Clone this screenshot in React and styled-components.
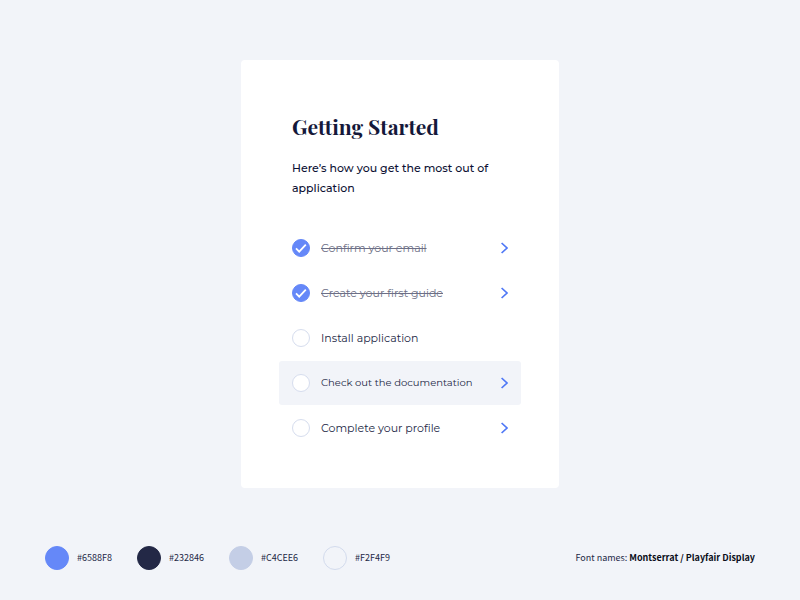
import React, { useState } from 'react'
import styled, { createGlobalStyle } from 'styled-components'

const GlobalStyle = createGlobalStyle`
    * {
        box-sizing: border-box;
    }

    body {
        margin: 0;
        background-color: #f2f4f9;
        color: #14183a;
        font-family: Montserrat, Inter, sans-serif;
    }
`

const Container = styled.div`
    min-height: 100vh;
    display: flex;
    flex-direction: column;
    justify-content: space-between;
    gap: 40px;
    padding: 60px 45px 30px;
`

const Card = styled.main`
    width: 100%;
    max-width: 318px;
    margin: 0 auto;
    padding: 51px 38px 37px;
    border-radius: 4px;
    background-color: white;
`

const Header = styled.header`
    padding: 0 13px;
    margin-bottom: 28px;
`

const Title = styled.h1`
    margin: 0;
    font-family: "Playfair Display", "Liberation Serif", serif;
    font-size: 21px;
    line-height: 30px;
    font-weight: 700;
`

const Desc = styled.p`
    margin: 17px 0 0;
    font-size: 11px;
    line-height: 20px;
    font-weight: 500;
    color: #0c1033;
`

const List = styled.ul`
    list-style: none;
    margin: 0;
    padding: 0;
`

const Item = styled.li`
    height: 44px;
    margin-bottom: 1px;
    padding: 0 13px;
    display: flex;
    align-items: center;
    border-radius: 3px;
    font-size: ${(props) => props.$active ? "10px" : "11px"};
    background-color: ${(props) => props.$active && "#f2f4f9"};
`

const Label = styled.label`
    flex: 1;
    display: flex;
    align-items: center;
    gap: 11px;
    line-height: 18px;
    color: ${(props) => props.$done ? "#6d6f86" : "#232846"};
    text-decoration: ${(props) => props.$done && "line-through"};
    cursor: pointer;
`

const CheckWrap = styled.span`
    display: grid;
    width: 18px;
    height: 18px;

    > * {
        grid-area: 1 / 1;
    }
`

const Checkbox = styled.input`
    appearance: none;
    width: 18px;
    height: 18px;
    margin: 0;
    border: 1px solid #d6ddee;
    border-radius: 50%;
    background-color: white;
    cursor: pointer;

    &:checked {
        border-color: #6588f8;
        background-color: #6588f8;
    }
`

const Tick = styled.svg`
    width: 18px;
    height: 18px;
    fill: none;
    stroke: white;
    stroke-width: 1.8;
    pointer-events: none;
`

const Open = styled.button`
    display: flex;
    padding: 0;
    border: none;
    background: none;
    color: #4f78f6;
    cursor: pointer;
`

const Footer = styled.footer`
    display: flex;
    flex-wrap: wrap;
    align-items: center;
    justify-content: space-between;
    font-family: "Noto Sans CJK JP", sans-serif;
    font-size: 9px;
    line-height: 24px;
    color: #232846;
`

const Palette = styled.div`
    display: flex;
    gap: 25px;
`

const Swatch = styled.div`
    display: flex;
    align-items: center;
    gap: 8px;
`

const Dot = styled.span`
    width: 24px;
    height: 24px;
    border-radius: 50%;
    border: 1px solid ${(props) => props.$border || props.$color};
    background-color: ${(props) => props.$color};
`

const Fonts = styled.p`
    margin: 0;

    b {
        color: #0a0e1a;
    }
`

const steps = [
    { id: "email", text: "Confirm your email", done: true, link: true },
    { id: "guide", text: "Create your first guide", done: true, link: true },
    { id: "install", text: "Install application", done: false, link: false },
    { id: "docs", text: "Check out the documentation", done: false, link: true, active: true },
    { id: "profile", text: "Complete your profile", done: false, link: true },
]

const colors = [
    { name: "#6588F8" },
    { name: "#232846" },
    { name: "#C4CEE6" },
    { name: "#F2F4F9", border: "#d3dbed" },
]

const Step = ({ step }) => {

    const [done, setDone] = useState(step.done)

    return (
        <Item $active={step.active}>
            <Label htmlFor={step.id} $done={done}>
                <CheckWrap>
                    <Checkbox id={step.id} type="checkbox" checked={done} onChange={() => setDone(!done)}/>
                    {done && <Tick viewBox="0 0 18 18"><path d="M4 9.4 L7.2 12.6 L13.8 5.6"/></Tick>}
                </CheckWrap>
                {step.text}
            </Label>
            {step.link && (
                <Open aria-label={step.text}>
                    <svg width="8" height="12" viewBox="0 0 8 12" fill="none" stroke="currentColor" strokeWidth="1.7">
                        <path d="M1.6 1 L7 6 L1.6 11"/>
                    </svg>
                </Open>
            )}
        </Item>
    )
}

const App = () => {
    return (
        <Container>
            <GlobalStyle />
            <Card>
                <Header>
                    <Title>Getting Started</Title>
                    <Desc>Here’s how you get the most out of application</Desc>
                </Header>
                <List>
                    {steps.map((step) => <Step key={step.id} step={step}/>)}
                </List>
            </Card>
            <Footer>
                <Palette>
                    {colors.map((color) => (
                        <Swatch key={color.name}>
                            <Dot $color={color.name} $border={color.border}/>
                            {color.name}
                        </Swatch>
                    ))}
                </Palette>
                <Fonts>Font names: <b>Montserrat / Playfair Display</b></Fonts>
            </Footer>
        </Container>
    )
}

export default App
